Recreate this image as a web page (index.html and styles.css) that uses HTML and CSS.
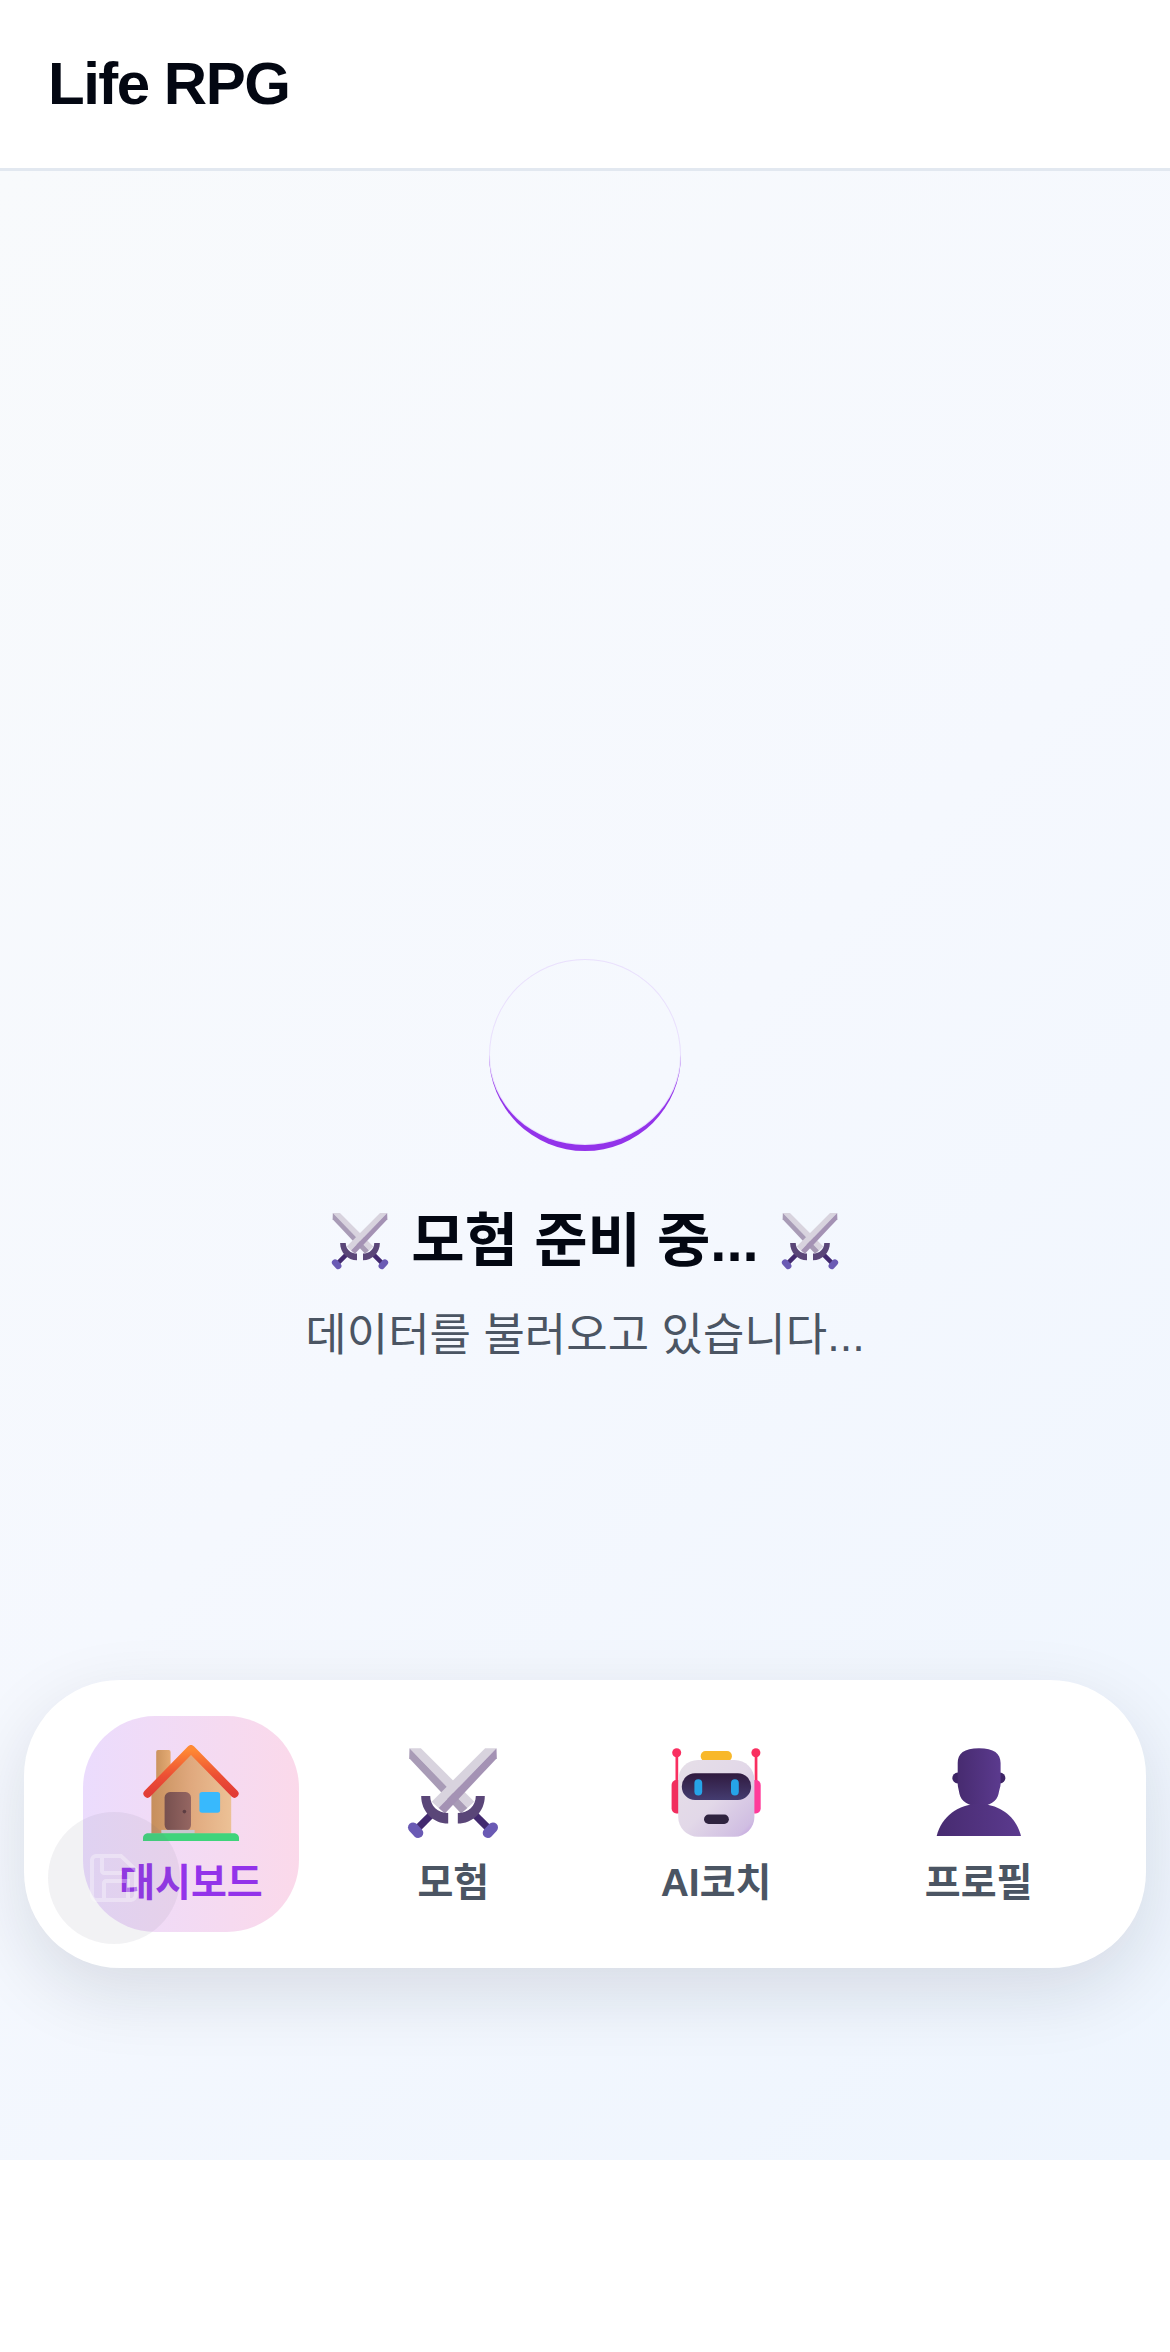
FILE: index.html
```html
<!DOCTYPE html>
<html lang="ko">
	<head>
		<meta name="viewport" content="width=device-width, initial-scale=1" />
		<title>Life RPG</title>
		<link rel="stylesheet" href="styles.css">
	</head>
	<body>
		<svg class="defs" width="0" height="0" aria-hidden="true">
			<defs>
				<linearGradient id="wall" x1="0" y1="0" x2="1" y2="0">
					<stop offset="0" stop-color="#c68f5c" />
					<stop offset="0.5" stop-color="#e0a97e" />
					<stop offset="1" stop-color="#ecc196" />
				</linearGradient>
				<linearGradient id="roof" x1="0" y1="0" x2="0" y2="1">
					<stop offset="0" stop-color="#ff8a34" />
					<stop offset="0.6" stop-color="#ec4f34" />
					<stop offset="1" stop-color="#e23c36" />
				</linearGradient>
				<linearGradient id="door" x1="0" y1="0" x2="1" y2="0">
					<stop offset="0" stop-color="#77504f" />
					<stop offset="1" stop-color="#956662" />
				</linearGradient>
				<linearGradient id="chimney" x1="0" y1="0" x2="1" y2="0">
					<stop offset="0" stop-color="#cb935e" />
					<stop offset="1" stop-color="#e4ab74" />
				</linearGradient>
				<linearGradient id="head" x1="0" y1="0" x2="1" y2="1">
					<stop offset="0" stop-color="#e6dfe8" />
					<stop offset="0.5" stop-color="#e2d8e8" />
					<stop offset="0.88" stop-color="#d0bee2" />
					<stop offset="1" stop-color="#bf97e0" />
				</linearGradient>
				<linearGradient id="visor" x1="0" y1="0" x2="0" y2="1">
					<stop offset="0" stop-color="#301a3f" />
					<stop offset="1" stop-color="#443c70" />
				</linearGradient>
				<linearGradient id="person" x1="0" y1="0" x2="1" y2="0">
					<stop offset="0" stop-color="#472b70" />
					<stop offset="1" stop-color="#5b3a8e" />
				</linearGradient>
				<symbol id="swords" viewBox="0 0 32 32">
					<polygon points="5.3,1.1 1.5,1.1 20.8,21 23.1,18.9" fill="#d8d3de" />
					<polygon points="1.5,1.1 1.4,4.4 18.7,22.8 20.8,21" fill="#a89bb6" />
					<path d="M9 23 4.2 27.8" stroke="#42296f" stroke-width="2.4" />
					<path d="M23 23 27.8 27.8" stroke="#42296f" stroke-width="2.4" />
					<path d="M2.7 27.5 4.4 29.3" stroke="#6a5ab4" stroke-width="3.4" stroke-linecap="round" />
					<path d="M29.3 27.5 27.6 29.3" stroke="#6a5ab4" stroke-width="3.4" stroke-linecap="round" />
					<polygon points="26.7,1.1 30.5,1.1 11.2,21 8.9,18.9" fill="#d8d3de" />
					<polygon points="30.5,1.1 30.6,4.4 13.3,22.8 11.2,21" fill="#a492b4" />
					<path d="M5.4 17H8.4C8.4 20.2 10.9 22.7 14.4 22.7V26.2C9.4 26.2 5.4 22.2 5.4 17Z" fill="#5a4678" />
					<path d="M26.6 17H23.6C23.6 20.2 21.1 22.7 17.6 22.7V26.2C22.6 26.2 26.6 22.2 26.6 17Z" fill="#5a4678" />
				</symbol>
			</defs>
		</svg>

		<header class="topbar">
			<h1 class="brand">Life RPG</h1>
		</header>

		<main class="content">
			<div class="loading">
				<div class="spinner"></div>
				<h2 class="loading-title">
					<svg class="title-icon"><use href="#swords" /></svg>
					<span>모험 준비 중...</span>
					<svg class="title-icon"><use href="#swords" /></svg>
				</h2>
				<p class="loading-text">데이터를 불러오고 있습니다...</p>
			</div>

			<nav class="tabbar">
				<a class="tab tab-active">
					<svg class="tab-icon" viewBox="0 0 32 32">
						<rect x="4.4" y="1.7" width="4.8" height="14" rx="0.6" fill="url(#chimney)" />
						<path d="M2.8 16.5 16 3 29.4 16.5V29.6H2.8Z" fill="url(#wall)" />
						<path d="M1.5 16.2 16 1.4 30.5 16.2" fill="none" stroke="url(#roof)" stroke-width="2.7" stroke-linecap="round" stroke-linejoin="round" />
						<rect x="7.2" y="15.7" width="8.8" height="12.8" rx="1.8" fill="url(#door)" />
						<circle cx="13.8" cy="22.2" r="0.6" fill="#5c3d42" />
						<rect x="18.8" y="15.7" width="6.9" height="6.9" rx="0.9" fill="#38b9fd" />
						<rect x="6.1" y="28.3" width="11.1" height="1.3" fill="#c9c6cf" />
						<path d="M0 32V31C0 30 .8 29.4 1.8 29.4H30.2C31.2 29.4 32 30 32 31V32Z" fill="#3fd47b" />
					</svg>
					<span>대시보드</span>
				</a>
				<a class="tab">
					<svg class="tab-icon"><use href="#swords" /></svg>
					<span>모험</span>
				</a>
				<a class="tab">
					<svg class="tab-icon" viewBox="0 0 32 32">
						<rect x="2.5" y="3" width="0.9" height="13" fill="#f92f60" />
						<rect x="28.9" y="3" width="0.9" height="13" fill="#f92f60" />
						<circle cx="2.9" cy="2.6" r="1.5" fill="#f92f60" />
						<circle cx="29.3" cy="2.6" r="1.5" fill="#f92f60" />
						<rect x="1.2" y="11.7" width="4" height="11.1" rx="1.6" fill="#f12e5e" />
						<rect x="27" y="11.7" width="3.9" height="11.1" rx="1.6" fill="#ff3b9a" />
						<rect x="10.9" y="2" width="10.4" height="3.4" rx="1.6" fill="#f8b82a" />
						<rect x="3.4" y="5" width="25.4" height="25.6" rx="6.6" fill="url(#head)" />
						<rect x="4.6" y="9.4" width="23.1" height="8.9" rx="4.4" fill="url(#visor)" />
						<rect x="8.8" y="11.4" width="2.6" height="5.4" rx="1.3" fill="#26a4e8" />
						<rect x="21" y="11.4" width="2.6" height="5.4" rx="1.3" fill="#26a4e8" />
						<rect x="12" y="23.2" width="8.3" height="3.1" rx="1.55" fill="#2f2340" />
					</svg>
					<span>AI코치</span>
				</a>
				<a class="tab">
					<svg class="tab-icon" viewBox="0 0 32 32">
						<circle cx="8.9" cy="11" r="1.8" fill="#3e2566" />
						<circle cx="23" cy="11" r="1.8" fill="#3e2566" />
						<path d="M16 1.1C11 1.1 8.9 2.9 8.9 6V13C8.9 14 9.3 15 9.5 16.3 10 18.7 12.5 20.4 16 20.4S22 18.7 22.5 16.3C22.7 15 23.2 14 23.2 13V6C23.2 2.9 21 1.1 16 1.1Z" fill="url(#person)" />
						<path d="M1.9 30.3C3.5 24 9 19.7 16 19.7S28.4 24 30 30.3Z" fill="url(#person)" />
					</svg>
					<span>프로필</span>
				</a>
			</nav>
		</main>

		<div class="float-btn">
			<svg viewBox="0 0 48 50" width="48" height="50">
				<path d="M6 3H31L46 17V41C46 44 44 47 41 47H6C4 47 2 45 2 42V7C2 5 4 3 6 3Z" fill="none" stroke="#fff" stroke-width="4" />
				<path d="M12 4V18C12 19 13 20 14 20H32" fill="none" stroke="#fff" stroke-width="4" />
				<path d="M14 46V30C14 29 15 28 16 28H38V46" fill="none" stroke="#fff" stroke-width="4" />
			</svg>
		</div>
	</body>
</html>
```

FILE: styles.css
```css
html {
	font-family: "Liberation Sans", "Noto Sans CJK KR", sans-serif;
}
body {
	margin: 0;
	height: 2352px;
	box-sizing: border-box;
	padding-bottom: 192px;
	display: flex;
	flex-direction: column;
	position: relative;
	background: #fff;
}
.defs {
	position: absolute;
}

.topbar {
	height: 168px;
	flex-shrink: 0;
	display: flex;
	align-items: center;
	padding: 0 48px;
	background: #fff;
	border-bottom: 3px solid #e2e8f0;
}
.brand {
	margin: 0;
	font-size: 60px;
	line-height: 84px;
	font-weight: 700;
	letter-spacing: -1.5px;
	color: #030712;
}

.content {
	flex: 1;
	position: relative;
	display: flex;
	align-items: center;
	justify-content: center;
	background: linear-gradient(135deg, #f8fafc 0%, #f5f8fe 50%, #eef5fe 100%);
}
.loading {
	display: flex;
	flex-direction: column;
	align-items: center;
}
.spinner {
	width: 192px;
	height: 192px;
	box-sizing: border-box;
	border-radius: 50%;
	border-bottom: 6px solid #9333ea;
	box-shadow: inset 0 0 0 1px rgba(168, 85, 247, 0.15);
	margin-bottom: 48px;
}
.loading-title {
	margin: 0 0 17px;
	display: flex;
	align-items: center;
	gap: 21px;
	font-size: 58px;
	line-height: 84px;
	font-weight: 700;
	color: #030712;
}
.title-icon {
	width: 60px;
	height: 60px;
}
.loading-text {
	margin: 0;
	font-size: 45px;
	line-height: 72px;
	color: #4b5563;
}

.tabbar {
	position: absolute;
	left: 24px;
	right: 24px;
	bottom: 192px;
	height: 288px;
	box-sizing: border-box;
	padding: 36px;
	display: flex;
	background: #fff;
	border-radius: 96px;
	box-shadow: 0 24px 72px rgba(15, 23, 42, 0.12);
}
.tab {
	flex: 1;
	display: flex;
	flex-direction: column;
	align-items: center;
	justify-content: center;
	gap: 18px;
	padding-top: 4px;
	font-size: 39px;
	line-height: 48px;
	font-weight: 700;
	color: #4b5563;
}
.tab-active {
	flex: none;
	width: 216px;
	margin: 0 23px;
	border-radius: 72px;
	color: #9333ea;
	background: linear-gradient(90deg, #ebdcfd, #fbd9ea);
}
.tab-icon {
	width: 96px;
	height: 96px;
}

.float-btn {
	position: absolute;
	left: 48px;
	bottom: 408px;
	width: 132px;
	height: 132px;
	border-radius: 50%;
	display: flex;
	align-items: center;
	justify-content: center;
	background: rgba(107, 114, 128, 0.09);
}
.float-btn svg {
	opacity: 0.35;
}
```
